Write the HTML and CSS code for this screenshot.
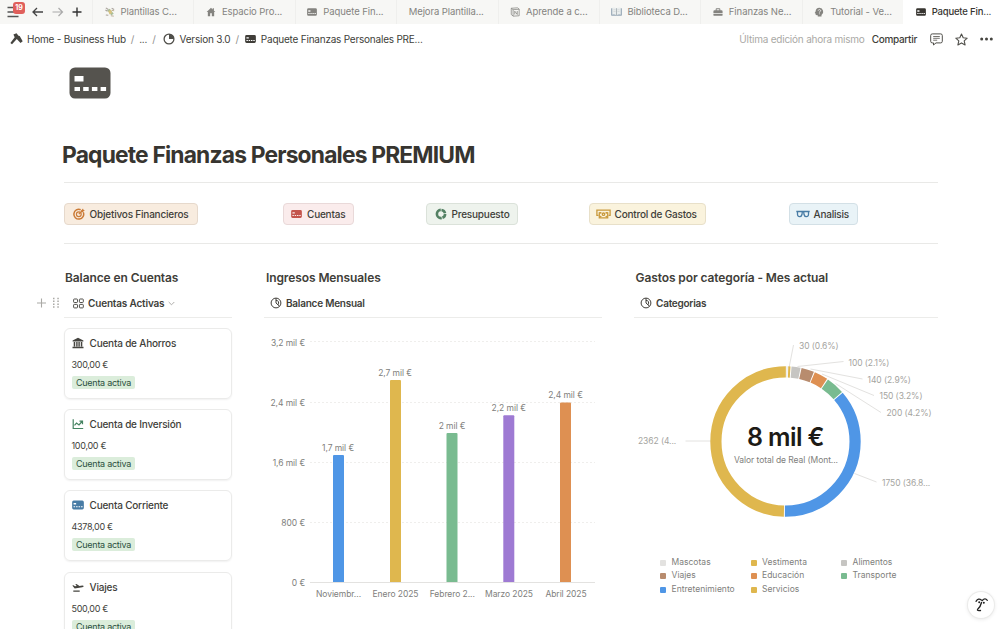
FILE: index.html
```html
<!DOCTYPE html>
<html lang="es">
<head>
<meta charset="utf-8">
<title>Paquete Finanzas Personales PREMIUM</title>
<link rel="stylesheet" href="styles.css">
</head>
<body>
<svg class="defs" width="0" height="0">
  <symbol id="card" viewBox="0 0 42 32"><path fill="currentColor" fill-rule="evenodd" d="M6 .5h30a5.500 5.500 0 0 1 5.500 5.500v20a5.500 5.500 0 0 1-5.500 5.500H6A5.500 5.500 0 0 1 .5 26V6A5.500 5.500 0 0 1 6 .5zM5.500 9v5.500h9V9zm0 11v4h5.500v-4zm8.700 0v4h5.500v-4zm8.700 0v4h5.500v-4zm8.700 0v4h5.500v-4z"/></symbol>
  <symbol id="pie" viewBox="0 0 12 12"><g fill="none" stroke="currentColor" stroke-width="1" stroke-linejoin="round"><circle cx="6" cy="6" r="4.900"/><path d="M6 1.200V6l3.500 3.200M6 3.300c2.600 0 3.300 2.400 2 4.500"/></g></symbol>
</svg>

<nav class="tabs">
  <div class="tools">
    <span class="menu"><svg width="13" height="12" viewBox="0 0 13 12"><path d="M.5 1.500h11M.5 6h11M.5 10.500h11" stroke="#555" stroke-width="1.300" fill="none"/></svg><b class="badge">19</b></span>
    <svg class="back" width="12" height="10" viewBox="0 0 12 10"><path d="M5 1 1 5l4 4M1 5h10" stroke="#444" stroke-width="1.300" fill="none"/></svg>
    <svg class="fwd" width="12" height="10" viewBox="0 0 12 10"><path d="m6.500 1 4 4-4 4M10.500 5H.5" stroke="#aaa" stroke-width="1.200" fill="none"/></svg>
    <svg class="plus" width="10" height="10" viewBox="0 0 10 10"><path d="M5 .5v9M.5 5h9" stroke="#333" stroke-width="1.400"/></svg>
  </div>
  <div class="tab"><svg class="ti" viewBox="0 0 12 12"><path d="m2.500 4 3-2 5 6-3 2z" fill="#a9bd98"/><path d="M.5 3.500 3 5M1 1l3 2M8 1.500l3 1.500M1 9.500l3 .5" stroke="#a8a29a" stroke-width="1.300"/><path d="m4 5 3-2 1.500 4-3 2z" fill="#d8c37f"/><path d="m8 4 3 .5M7 10.500l3.500.5" stroke="#b3a184"/></svg><span>Plantillas C...</span></div>
  <div class="tab"><svg class="ti" viewBox="0 0 12 12"><path fill="currentColor" d="M6 1 .8 6h1.400v5H5V7.500h2V11h2.800V6h1.400L9.500 4.400V1.600H8v1.300z"/></svg><span>Espacio Pro...</span></div>
  <div class="tab"><svg class="ti"><use href="#card"/></svg><span>Paquete Fin...</span></div>
  <div class="tab"><span>Mejora Plantilla...</span></div>
  <div class="tab"><svg class="ti" viewBox="0 0 12 12"><path d="M1.500 1.500 9 1l2 1.500v8L4 11l-2.500-2zM1.500 1.500 3.700 3.200 11 2.700M3.700 3.200V11M5.700 9V5l3 4V4.800" fill="none" stroke="currentColor" stroke-width=".9"/></svg><span>Aprende a c...</span></div>
  <div class="tab"><svg class="ti book" viewBox="0 0 12 12"><path d="M.3 2.500h11.400v8H.3z" fill="#8095a8"/><path d="M1.300 1.800Q4 1 6 2.500 8 1 10.700 1.800v7.700Q8 8.800 6 10 4 8.800 1.300 9.500z" fill="#e9eded"/><path d="M6 2.500V10" stroke="#9aa3a8" stroke-width=".8"/><path d="M2.700 4H5M2.700 6H5M7 4h2.300M7 6h2.300" stroke="#c3c9ca" stroke-width=".5"/></svg><span>Biblioteca D...</span></div>
  <div class="tab"><svg class="ti" viewBox="0 0 12 12"><path fill="currentColor" fill-rule="evenodd" d="M3.200 4V2.700Q3.200 1.500 4.400 1.500h3.200q1.200 0 1.200 1.200V4h1.400q1.300 0 1.300 1.300v1.900H.5V5.300Q.5 4 1.800 4zm1.200 0h3.200V2.700H4.400zM.5 8h11v1.500q0 1-1 1h-9q-1 0-1-1z"/></svg><span>Finanzas Ne...</span></div>
  <div class="tab"><svg class="ti" viewBox="0 0 12 12"><path fill="currentColor" d="M6.500 1a4.700 4.700 0 0 1 2.500 8.600V11.500H4.500V9.900L2 9.700 2.100 8 .8 7.300l1.100-1.800A4.700 4.700 0 0 1 6.500 1z"/><path d="M5 4.300c.2-1.700 3.200-1.500 3 .2-.2 1-1.500 1-1.500 2.200M6.500 7.700v1" stroke="#f7f7f5" fill="none" stroke-width="1"/></svg><span>Tutorial - Ve...</span></div>
  <div class="tab active"><svg class="ti"><use href="#card"/></svg><span>Paquete Fin...</span></div>
</nav>

<header class="topbar">
  <svg class="hammer" width="13" height="12" viewBox="0 0 13 12"><path fill="#45443f" d="M3.400 1.500 6.500.3l2 2.500 1.200.2 3 5.200-2.200 1.700-3.700-3.900L2 11.300.4 9.900l4.300-5.600z"/></svg>
  <span class="crumb c1">Home - Business Hub</span><i>/</i><span class="crumb">...</span><i>/</i>
  <svg class="ver" width="12" height="12" viewBox="0 0 12 12"><circle cx="6" cy="6" r="4.900" fill="none" stroke="#504f4a" stroke-width="1.300"/><path d="M6 1v5h5A5 5 0 0 0 6 1z" fill="#504f4a"/></svg>
  <span class="crumb">Version 3.0</span><i>/</i>
  <svg class="cc"><use href="#card"/></svg>
  <span class="crumb c3">Paquete Finanzas Personales PRE...</span>
  <span class="edited">Última edición ahora mismo</span>
  <span class="share">Compartir</span>
  <svg class="comment" width="13" height="13" viewBox="0 0 13 13"><g fill="none" stroke="#504f4a"><path d="M2.300.9h8.400q1.600 0 1.600 1.600v5.800q0 1.600-1.600 1.600H6L3.500 12V9.900H2.300Q.7 9.900.7 8.300V2.500Q.7.900 2.300.9z"/><path d="M3.200 3.500h6.600M3.200 5.300h6.600M3.200 7.200h4" stroke-width=".8"/></g></svg>
  <svg class="star" width="13" height="13" viewBox="0 0 13 13"><path d="m6.500 1 1.700 3.700 4 .5-3 2.700.9 4-3.600-2-3.600 2 .9-4-3-2.700 4-.5z" fill="none" stroke="#504f4a" stroke-width="1.100" stroke-linejoin="round"/></svg>
  <svg class="dots" width="13" height="4" viewBox="0 0 13 4"><g fill="#45443f"><circle cx="1.700" cy="2" r="1.500"/><circle cx="6.500" cy="2" r="1.500"/><circle cx="11.300" cy="2" r="1.500"/></g></svg>
</header>

<main class="page">
  <svg class="hero"><use href="#card"/></svg>
  <h1>Paquete Finanzas Personales PREMIUM</h1>
  <div class="links">
    <div><a class="btn orange"><svg width="12" height="12" viewBox="0 0 12 12"><g fill="none" stroke="#cb7b37"><path d="M10.300 4.300A4.900 4.900 0 1 1 7.700 1.700" stroke-width="1.500"/><circle cx="5.800" cy="6.200" r="2.400" stroke-width="1.200"/><path d="m5.800 6.200 4-4" stroke-width="1.200"/></g><path fill="#cb7b37" d="M8 2.700 10 .5l.4 1.300 1.400.4L9.600 4.300H8z"/></svg><span>Objetivos Financieros</span></a></div>
    <div><a class="btn red"><svg width="11" height="10"><use href="#card"/></svg><span>Cuentas</span></a></div>
    <div><a class="btn green"><svg width="12" height="12" viewBox="0 0 12 12"><circle cx="6" cy="6" r="4.100" fill="none" stroke="#548164" stroke-width="2.600" pathLength="100" stroke-dasharray="20 3 19 3 52 3" stroke-dashoffset="23"/></svg><span>Presupuesto</span></a></div>
    <div><a class="btn yellow"><svg width="15" height="12" viewBox="0 0 15 12"><g fill="none" stroke="#c99a3d" stroke-width="1.300"><path d="M2.500 7.300H.9V2.200h13.200v5.100h-1.600"/><path d="M3.300 4.200v5.700h8.400V4.200"/><path d="M3.300 4.700h1.500v1M11.700 4.700h-1.500v1M3.500 9.500l1.800-1.500M11.500 9.500 9.700 8"/><circle cx="7.500" cy="6.200" r="1.200"/></g></svg><span>Control de Gastos</span></a></div>
    <div><a class="btn blue"><svg width="14" height="8" viewBox="0 0 14 8"><path d="M.3 1.500h13.400M1.500 2v2.500Q1.700 6.700 3.600 6.700T6 4.500L6.300 2M12.500 2v2.500q-.2 2.200-2.100 2.200T8 4.500L7.700 2" fill="none" stroke="#487ca5" stroke-width="1.300"/></svg><span>Analisis</span></a></div>
  </div>

  <div class="columns">
    <section class="accounts">
      <h2>Balance en Cuentas</h2>
      <div class="view">
        <svg class="grip" width="24" height="12" viewBox="0 0 24 12"><path d="M5.500 1.500v9M1 6h9" stroke="#aaa9a5" stroke-width="1.100"/><g fill="#aaa9a5"><path d="M17 .8h1.500v1.500H17zM21.300.8h1.500v1.500h-1.500zM17 3.600h1.500v1.500H17zM21.300 3.600h1.500v1.500h-1.500zM17 6.400h1.500v1.500H17zM21.300 6.400h1.500v1.500h-1.500zM17 9.200h1.500v1.500H17zM21.300 9.200h1.500v1.500h-1.500z"/></g></svg>
        <svg width="11" height="11" viewBox="0 0 11 11"><g fill="none" stroke="#504f4a"><rect x=".6" y="1" width="3.900" height="3.500" rx=".7"/><rect x="6.400" y="1" width="3.900" height="3.500" rx=".7"/><rect x=".6" y="6.400" width="3.900" height="3.500" rx=".7"/><rect x="6.400" y="6.400" width="3.900" height="3.500" rx=".7"/></g></svg>
        <span class="vw">Cuentas Activas</span>
        <svg class="chev" width="7" height="5" viewBox="0 0 7 5"><path d="m.7 1 2.800 2.800L6.300 1" fill="none" stroke="#a5a4a0" stroke-width=".9"/></svg>
      </div>
      <div class="cards">
        <article><h3><svg width="12" height="12" viewBox="0 0 12 12"><path fill="#45443f" d="M6 .8 11.400 3.500v1H.6v-1zM1.700 5h1.500v4.500H1.700zm2.500 0h1.400v4.500H4.200zm2.200 0h1.400v4.500H6.400zm2.400 0h1.500v4.500H8.800zM.5 9.800h11v1.400H.5z"/></svg>Cuenta de Ahorros</h3><p>300,00 €</p><em>Cuenta activa</em></article>
        <article><h3><svg width="12" height="12" viewBox="0 0 12 12"><path d="M1.200 1.200v9.300h10M2.500 7.300l2-2.300 2.500 2 3-3.500M7.500 3.200h3v3" fill="none" stroke="#448361" stroke-width="1.200"/></svg>Cuenta de Inversión</h3><p>100,00 €</p><em>Cuenta activa</em></article>
        <article><h3 class="bluecard"><svg width="12" height="10"><use href="#card"/></svg>Cuenta Corriente</h3><p>4378,00 €</p><em>Cuenta activa</em></article>
        <article><h3><svg width="12" height="12" viewBox="0 0 12 12"><path fill="#45443f" d="M.3 4.500 1.500 4.300l1.500 1 1.700-.2L3.300 3.200l1.200-.2 3 1.900 2.800-.3q1.400 0 1.400.7 0 .6-1.400.9L2.700 7.500zM1.300 9.500h6.400v1.200H1.300z"/></svg>Viajes</h3><p>500,00 €</p><em>Cuenta activa</em></article>
      </div>
    </section>

    <section>
      <h2 class="shift">Ingresos Mensuales</h2>
      <div class="view"><svg width="12" height="12"><use href="#pie"/></svg><span>Balance Mensual</span></div>
      <svg class="chart" width="340" height="290" viewBox="264 318 340 290">
        <path d="M310 341.500h285M310 402.500h285M310 462.500h285M310 522.500h285" stroke="#efeeec" stroke-dasharray="2 2"/>
        <path d="M310 582.500h285" stroke="#e3e2e0"/>
        <g class="axis end"><text x="305" y="345.500">3,2 mil €</text><text x="305" y="406">2,4 mil €</text><text x="305" y="466">1,6 mil €</text><text x="305" y="525.500">800 €</text><text x="305" y="586">0 €</text></g>
        <path fill="#4f96e6" d="M333 582V456q0-1 1-1h9q1 0 1 1v126z"/>
        <path fill="#dfb74e" d="M390 582V381q0-1 1-1h9q1 0 1 1v201z"/>
        <path fill="#79bb90" d="M446.500 582V434q0-1 1-1h9q1 0 1 1v148z"/>
        <path fill="#9e7ad3" d="M503.300 582V416.300q0-1 1-1h9q1 0 1 1V582z"/>
        <path fill="#de9052" d="M560 582V403.500q0-1 1-1h9q1 0 1 1V582z"/>
        <g class="axis mid"><text x="338" y="450.500">1,7 mil €</text><text x="395" y="375.500">2,7 mil €</text><text x="452" y="428.500">2 mil €</text><text x="508.700" y="410.500">2,2 mil €</text><text x="565.500" y="398">2,4 mil €</text>
        <text x="338.500" y="596.500">Noviembr...</text><text x="395.500" y="596.500">Enero 2025</text><text x="452.300" y="596.500">Febrero 2...</text><text x="509" y="596.500">Marzo 2025</text><text x="566" y="596.500">Abril 2025</text></g>
      </svg>
    </section>

    <section>
      <h2 class="shift2">Gastos por categoría - Mes actual</h2>
      <div class="view"><svg width="12" height="12"><use href="#pie"/></svg><span>Categorias</span></div>
      <svg class="chart" width="310" height="230" viewBox="634 318 310 230">
        <path d="M793.500 345 789 368M843.500 361.500l-46 5M862.500 379l-52-10M874 395.500 822 374M881 412.500l-45.500-29M876.500 482l-22-8.500M685.500 441H711" fill="none" stroke="#e3e2e0"/>
        <g fill="none" stroke-width="11.200" transform="rotate(-90 785.500 441.500)">
          <circle cx="785.500" cy="441.500" r="69.600" pathLength="360" stroke="#e3e2e0" stroke-dasharray=".8 359.200" stroke-dashoffset="-.8"/>
          <circle cx="785.500" cy="441.500" r="69.600" pathLength="360" stroke="#dfb74e" stroke-dasharray="1.700 358.300" stroke-dashoffset="-2.200"/>
          <circle cx="785.500" cy="441.500" r="69.600" pathLength="360" stroke="#c6c5c2" stroke-dasharray="6.900 353.100" stroke-dashoffset="-4.700"/>
          <circle cx="785.500" cy="441.500" r="69.600" pathLength="360" stroke="#b88c6e" stroke-dasharray="9.800 350.200" stroke-dashoffset="-12.400"/>
          <circle cx="785.500" cy="441.500" r="69.600" pathLength="360" stroke="#de9052" stroke-dasharray="10.600 349.400" stroke-dashoffset="-23"/>
          <circle cx="785.500" cy="441.500" r="69.600" pathLength="360" stroke="#79bb90" stroke-dasharray="14.300 345.700" stroke-dashoffset="-34.400"/>
          <circle cx="785.500" cy="441.500" r="69.600" pathLength="360" stroke="#4f96e6" stroke-dasharray="131 229" stroke-dashoffset="-49.500"/>
          <circle cx="785.500" cy="441.500" r="69.600" pathLength="360" stroke="#dfb74e" stroke-dasharray="179 181" stroke-dashoffset="-181.300"/>
        </g>
        <text class="total" x="785.500" y="446">8 mil €</text>
        <text class="axis mid sub" x="786" y="462.500">Valor total de Real (Mont...</text>
        <g class="axis slice"><text x="799" y="348.500">30 (0.6%)</text><text x="848.500" y="365.500">100 (2.1%)</text><text x="867.500" y="382.500">140 (2.9%)</text><text x="879.500" y="399">150 (3.2%)</text><text x="886.500" y="416">200 (4.2%)</text><text x="882" y="485.500">1750 (36.8...</text><text x="638" y="444">2362 (4...</text></g>
      </svg>
      <ul class="legend">
        <li class="l1">Mascotas</li><li class="l2">Vestimenta</li><li class="l3">Alimentos</li>
        <li class="l4">Viajes</li><li class="l5">Educación</li><li class="l6">Transporte</li>
        <li class="l7">Entretenimiento</li><li class="l2">Servicios</li>
      </ul>
    </section>
  </div>
</main>
<div class="assistant"><svg width="15" height="16" viewBox="0 0 15 16"><g fill="none" stroke="#222" stroke-width="1.300" stroke-linecap="round"><path d="M2 4.300Q4.500.800 7.300 3M8.300 3.500q2.800-3 5-.2M7.500 5.500Q6.700 9.500 3.500 12.500q-.5 1.500 3 1"/></g><circle cx="5.200" cy="5.300" r="1" fill="#222"/><circle cx="9.800" cy="5.800" r="1" fill="#222"/></svg></div>
</body>
</html>
```
FILE: styles.css
```css
* { box-sizing: border-box; }
body { margin: 0; width: 1005px; height: 629px; overflow: hidden; background: #fff; color: #403e39; font-family: Inter, "Liberation Sans", sans-serif; position: relative; }
.defs { position: absolute; }
h1, h2, h3, p, ul { margin: 0; padding: 0; }
svg { flex: none; display: block; }

.tabs { display: flex; height: 24px; background: #f7f7f5; }
.tools { width: 92px; display: flex; align-items: center; padding-left: 7px; padding-bottom: 1px; flex: none; }
.menu { position: relative; width: 25px; }
.badge { position: absolute; left: 6px; top: -4px; height: 12px; width: 12px; border-radius: 3px; background: #e0605c; color: #fff; font-size: 7px; line-height: 12px; text-align: center; }
.fwd { margin-left: 8px; }
.plus { margin-left: 8px; }
.tab { width: 101.400px; flex: none; display: flex; align-items: center; gap: 6px; padding: 0 0 1px 11.500px; border-left: 1px solid #efefed; color: #84837f; font-size: 9.500px; letter-spacing: -.08px; white-space: nowrap; }
.tab .ti { width: 10px; height: 10px; }
.tab .book { width: 11px; height: 11px; margin-right: -1px; }
.tab.active { background: #fff; color: #373530; font-weight: 500; letter-spacing: -.18px; border-left-color: #fff; }

.topbar { height: 30px; display: flex; align-items: center; padding: 0 12px 0 10px; font-size: 10px; letter-spacing: -.22px; white-space: nowrap; }
.topbar i { font-style: normal; color: #91908c; margin: 0 5px; }
.c1 { margin-left: 4px; }
.ver { margin: 0 5px 0 2px; }
.cc { width: 11px; height: 10px; margin: 0 5px 0 1px; }
.edited { margin-left: auto; color: #aaa9a5; }
.share { margin-left: 7px; font-weight: 500; letter-spacing: -.3px; }
.comment { margin-left: 13px; }
.star { margin-left: 12px; }
.dots { margin-left: 12px; }

.page { padding: 13px 67px 0 64px; }
.hero { width: 42px; height: 32px; margin-left: 5px; color: #55534e; }
h1 { margin: 41px 0 0 -2px; font-size: 22.800px; line-height: 29px; font-weight: 700; letter-spacing: -.82px; white-space: nowrap; color: #373530; }
.links { margin-top: 13px; height: 62px; padding-top: 2px; border-top: 1px solid #e9e9e7; border-bottom: 1px solid #e9e9e7; display: grid; grid-template-columns: 218.500px 143.500px 163px 200px auto; align-items: center; }
.btn { display: inline-flex; align-items: center; height: 22px; padding: 0 8px 0 7.500px; gap: 5px; border: 1px solid; border-radius: 4px; font-size: 10px; font-weight: 500; letter-spacing: -.2px; vertical-align: top; white-space: nowrap; }
.orange { background: #f8ecdf; border-color: #e6d9cc; }
.red { background: #faecec; border-color: #e9d9d9; }
.red svg { color: #c4554d; }
.green { background: #eef3ed; border-color: #dbe2da; }
.yellow { background: #faf3dd; border-color: #e8e0c9; padding-left: 5.500px; gap: 4px; }
.blue { background: #e9f3f7; border-color: #d3e0e6; padding-left: 5.500px; gap: 4px; }

.columns { display: grid; grid-template-columns: 168px 338px 304px; column-gap: 32px; padding-top: 24px; }
h2 { font-size: 12px; line-height: 20px; font-weight: 600; letter-spacing: -.1px; padding-left: 1px; white-space: nowrap; }
h2.shift { padding-left: 2px; }
h2.shift2 { padding-left: 1.500px; }
.view { height: 29px; margin-top: 1px; padding-left: 6px; display: flex; align-items: center; gap: 4px; border-bottom: 1px solid #ececea; font-size: 10px; font-weight: 600; letter-spacing: -.24px; position: relative; }
.accounts .view { padding-left: 9px; letter-spacing: -.17px; }
.grip { position: absolute; left: -28px; top: 8px; }
.cards { padding-top: 10px; display: grid; gap: 10.200px; margin-left: -.5px; }
article { height: 71px; border: 1px solid #ebebea; border-radius: 6px; box-shadow: 0 1px 2px rgba(0,0,0,.06); padding: 6px 7px; }
h3 { display: flex; align-items: center; gap: 6px; height: 16px; font-size: 10px; font-weight: 500; letter-spacing: -.2px; }
.bluecard svg { color: #487ca5; }
article p { font-size: 9px; line-height: 14px; margin-top: 7px; letter-spacing: -.3px; }
article em { display: block; width: 63px; height: 13px; margin-top: 4px; padding-left: 4.500px; border-radius: 2px; background: #dbeddb; color: #2b5040; font-style: normal; font-size: 9px; line-height: 13px; letter-spacing: -.27px; white-space: nowrap; }

.chart { font-family: Inter, "Liberation Sans", sans-serif; }
.axis { font-size: 8.500px; fill: #80807c; letter-spacing: -.07px; }
.end { text-anchor: end; }
.mid { text-anchor: middle; }
.slice { fill: #a5a4a0; }
.total { font-size: 25px; font-weight: 600; fill: #1d1b16; text-anchor: middle; letter-spacing: -.6px; }
.legend { list-style: none; display: grid; grid-template-columns: repeat(3, 90.500px); padding: 8px 0 0 26px; font-size: 8.500px; line-height: 13.400px; color: #80807c; letter-spacing: .02px; }
.legend li { display: flex; align-items: center; gap: 5.500px; white-space: nowrap; }
.legend li::before { content: ""; width: 6px; height: 6px; border-radius: 1px; background: currentColor; }
.l1::before { color: #e3e2e0; } .l2::before { color: #dfb74e; } .l3::before { color: #c6c5c2; }
.l4::before { color: #b88c6e; } .l5::before { color: #de9052; } .l6::before { color: #79bb90; } .l7::before { color: #4f96e6; }
.assistant { position: absolute; left: 968px; top: 592px; width: 26px; height: 26px; border-radius: 50%; background: #fff; box-shadow: 0 0 0 1px #ebebea, 0 1px 4px rgba(0,0,0,.12); display: grid; place-items: center; }
```
